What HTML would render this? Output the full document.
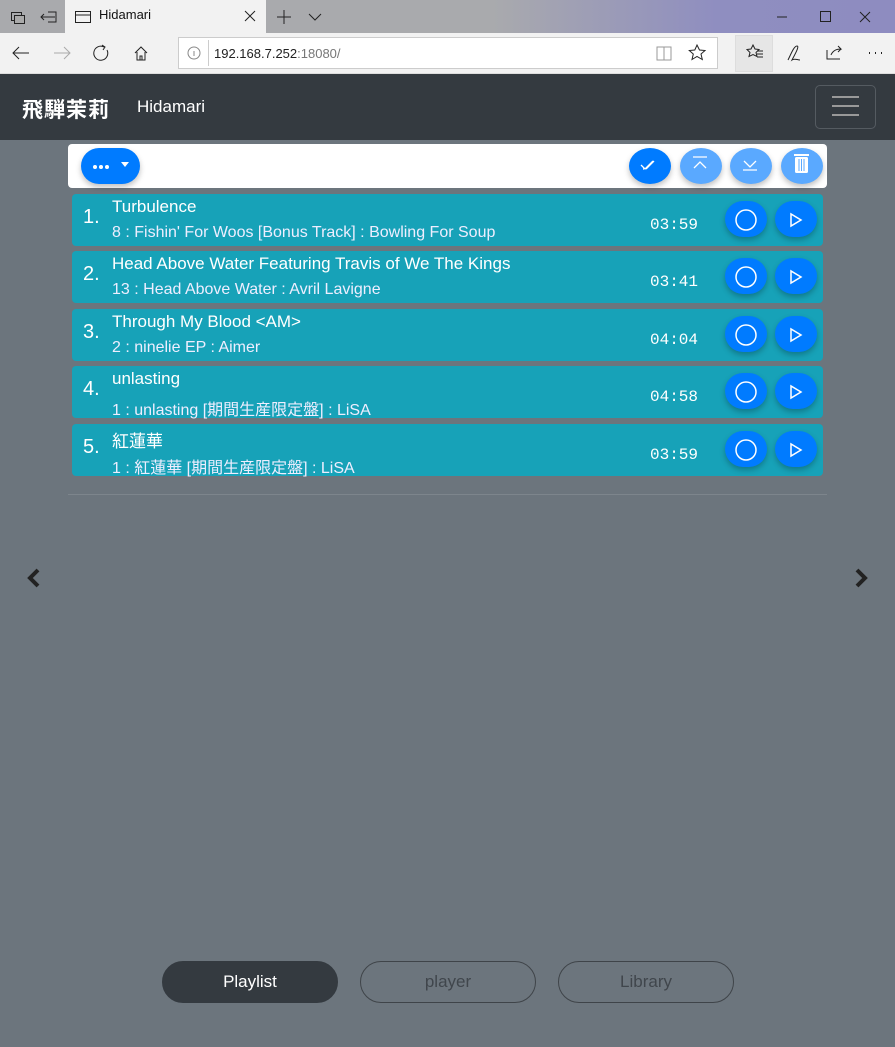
<!DOCTYPE html>
<html><head><meta charset="utf-8"><style>
*{box-sizing:border-box;margin:0;padding:0}
body{width:895px;height:1047px;overflow:hidden;background:#6c757d;font-family:"Liberation Sans","Noto Sans CJK JP",sans-serif;position:relative}
.abs{position:absolute}
.tabbar{left:0;top:0;width:895px;height:33px;background:linear-gradient(90deg,#a9aaad 0%,#a9aaad 55%,#8f8ec0 80%,#8e8cc0 100%)}
.tab{left:65px;top:0;width:201px;height:33px;background:#f2f2f2}
.nav{left:0;top:33px;width:895px;height:41px;background:#f2f2f2;border-bottom:1px solid #ddd}
.addr{left:178px;top:37px;width:540px;height:32px;background:#fff;border:1px solid #ccc}
.hdr{left:0;top:74px;width:895px;height:66px;background:#343a40}
.tool{left:68px;top:144px;width:759px;height:44px;background:#fff;border-radius:4px}
.cb{border-radius:50%;width:42px;height:36px;position:absolute;top:148px;box-shadow:0 3px 6px rgba(0,0,0,.25)}
.row{position:absolute;left:72px;width:751px;height:52px;background:#17a2b8;border-radius:4px;color:#fff}
.num{position:absolute;left:11px;top:12px;font-size:20px}
.t1{position:absolute;left:40px;top:3px;font-size:17px}
.t2{position:absolute;left:40px;top:30px;font-size:16px;color:#eef}
.tm{position:absolute;left:578px;top:22px;font-family:"Liberation Mono",monospace;font-size:16px}
.rb{position:absolute;top:7px;width:42px;height:36px;border-radius:18px;background:#007bff;box-shadow:0 3px 6px rgba(0,0,0,.25)}
.pill{position:absolute;top:961px;width:176px;height:42px;border-radius:21px;border:1px solid #3f4449;text-align:center;line-height:40px;font-size:17px;color:#40464c}
</style></head><body>
<div class="abs tabbar"></div>
<div class="abs tab"></div>
<div class="abs nav"></div>
<div class="abs addr"></div>
<div class="abs" style="left:208px;top:40px;width:1px;height:26px;background:#ccc"></div>
<div class="abs" style="left:735px;top:35px;width:38px;height:37px;background:#e6e6e6;border:1px solid #ddd"></div>
<svg class="abs" style="left:0;top:0" width="895" height="74" fill="none" stroke="#222" stroke-width="1">
<rect x="11.5" y="12.5" width="10" height="8"/><rect x="14.5" y="15.5" width="10" height="8" fill="#aaa"/>
<path d="M41 17h14M44 14l-3 3 3 3M48 12h8v10h-8"/>
<rect x="75.5" y="11.5" width="15" height="11"/><path d="M76 15h14"/>
<path d="M245 11l10 10M255 11l-10 10M284 10v14M277 17h14M309 14l6 6 6-6"/>
<path d="M777 17h10M820.5 11.5h10v10h-10zM860 12l10 10M870 12l-10 10"/>
<path d="M13 53h16M19 47l-6 6 6 6" /><path d="M54 53h16M64 47l6 6-6 6" stroke="#aaa"/>
<path d="M104 47a7 7 0 1 0 3 3M102 45l3 2-2 3"/>
<path d="M135 53l6-6 6 6M137 52v8h8v-8M140 60v-4h2v4"/>
<circle cx="194" cy="53" r="6" stroke="#888"/><path d="M194 51v5" stroke="#888"/>
<path d="M657 47h14v13h-14zM664 47v13" stroke="#999"/>
<path d="M697 45l2.5 5 5.5.5-4 3.5 1.3 5.5-5.3-3-5 3 1.3-5.5-4-3.5 5.5-.5z"/>
<path d="M753 45l2 4 4 .5-3 3 1 4-4-2-4 2 1-4-3-3 4-.5zM757 51h6M757 54h6M757 57h6"/>
<path d="M788 60c3-6 6-14 9-14s-3 10-5 14c3-2 5 0 8 0"/>
<path d="M827 50v9h13M831 55c2-5 6-6 10-6l-3-3M841 49l-3 3"/>
<path d="M869 53h1M875 53h1M881 53h1" stroke-width="2"/>
</svg>
<div class="abs" style="left:99px;top:7px;font-size:13px;color:#111">Hidamari</div>
<div class="abs" style="left:214px;top:46px;font-size:13px;color:#222">192.168.7.252<span style="color:#777">:18080/</span></div>
<div class="abs hdr"></div>
<div class="abs" style="left:22px;top:94px;font-size:21px;color:#fff;font-weight:bold;letter-spacing:1px">飛騨茉莉</div>
<div class="abs" style="left:137px;top:97px;font-size:17px;color:#fff">Hidamari</div>
<div class="abs" style="left:815px;top:85px;width:61px;height:44px;border:1px solid #555b61;border-radius:5px"></div>
<div class="abs" style="left:832px;top:96px;width:27px;height:2px;background:#999;box-shadow:0 9px 0 #999,0 18px 0 #999"></div>

<div class="abs tool"></div>
<div class="abs" style="left:81px;top:148px;width:59px;height:36px;border-radius:18px;background:#007bff;box-shadow:0 3px 6px rgba(0,0,0,.25)"></div>
<div class="abs" style="left:93px;top:165px;width:4px;height:4px;border-radius:2px;background:#fff;box-shadow:6px 0 #fff,12px 0 #fff"></div>
<div class="abs" style="left:121px;top:162px;border:4px solid transparent;border-top:5px solid #fff"></div>
<div class="cb" style="left:629px;background:#007bff"></div>
<div class="cb" style="left:680px;background:#5aa9ff"></div>
<div class="cb" style="left:730px;background:#5aa9ff"></div>
<div class="cb" style="left:781px;background:#5aa9ff"></div>
<svg class="abs" style="left:0;top:140px" width="895" height="50" fill="none" stroke="#fff" stroke-width="1.3">
<path d="M641 25l4 4 8-8M646 29l8-8M644 29l-1 0"/>
<path d="M693 17h14M694 28l6-6 6 6"/>
<path d="M743 30h14M744 21l6 6 6-6"/>
<rect x="795" y="17" width="13" height="16" rx="1.5" fill="#fff" stroke="none"/>
<rect x="794" y="14" width="15" height="2" fill="#fff" stroke="none"/>
<path d="M799 19v12M801.5 19v12M804 19v12" stroke="#5aa9ff" stroke-width="1"/>
</svg>

<div class="row" style="top:194px"><div class="num">1.</div><div class="t1">Turbulence</div><div class="t2">8 : Fishin' For Woos [Bonus Track] : Bowling For Soup</div><div class="tm">03:59</div><div class="rb" style="left:653px"></div><div class="rb" style="left:703px"></div></div>
<div class="row" style="top:251px"><div class="num">2.</div><div class="t1">Head Above Water Featuring Travis of We The Kings</div><div class="t2">13 : Head Above Water : Avril Lavigne</div><div class="tm">03:41</div><div class="rb" style="left:653px"></div><div class="rb" style="left:703px"></div></div>
<div class="row" style="top:309px"><div class="num">3.</div><div class="t1">Through My Blood &lt;AM&gt;</div><div class="t2">2 : ninelie EP : Aimer</div><div class="tm">04:04</div><div class="rb" style="left:653px"></div><div class="rb" style="left:703px"></div></div>
<div class="row" style="top:366px"><div class="num">4.</div><div class="t1">unlasting</div><div class="t2">1 : unlasting [期間生産限定盤] : LiSA</div><div class="tm">04:58</div><div class="rb" style="left:653px"></div><div class="rb" style="left:703px"></div></div>
<div class="row" style="top:424px"><div class="num">5.</div><div class="t1">紅蓮華</div><div class="t2">1 : 紅蓮華 [期間生産限定盤] : LiSA</div><div class="tm">03:59</div><div class="rb" style="left:653px"></div><div class="rb" style="left:703px"></div></div>
<svg class="abs" style="left:0;top:190px" width="895" height="300" fill="none" stroke="#fff" stroke-width="1.5">
<g id="ic"><circle cx="746" cy="30" r="10"/><path d="M791 24v12l10-6z"/></g>
<use href="#ic" y="57"/><use href="#ic" y="115"/><use href="#ic" y="172"/><use href="#ic" y="230"/>
</svg>
<div class="abs" style="left:68px;top:494px;width:759px;height:1px;background:#7d858c"></div>
<svg class="abs" style="left:0;top:560px" width="895" height="40" fill="none" stroke="#222" stroke-width="4">
<path d="M38 10l-8 8 8 8M857 10l8 8-8 8"/></svg>

<div class="pill" style="left:162px;background:#343a40;border-color:#343a40;color:#fff">Playlist</div>
<div class="pill" style="left:360px">player</div>
<div class="pill" style="left:558px">Library</div>
</body></html>
